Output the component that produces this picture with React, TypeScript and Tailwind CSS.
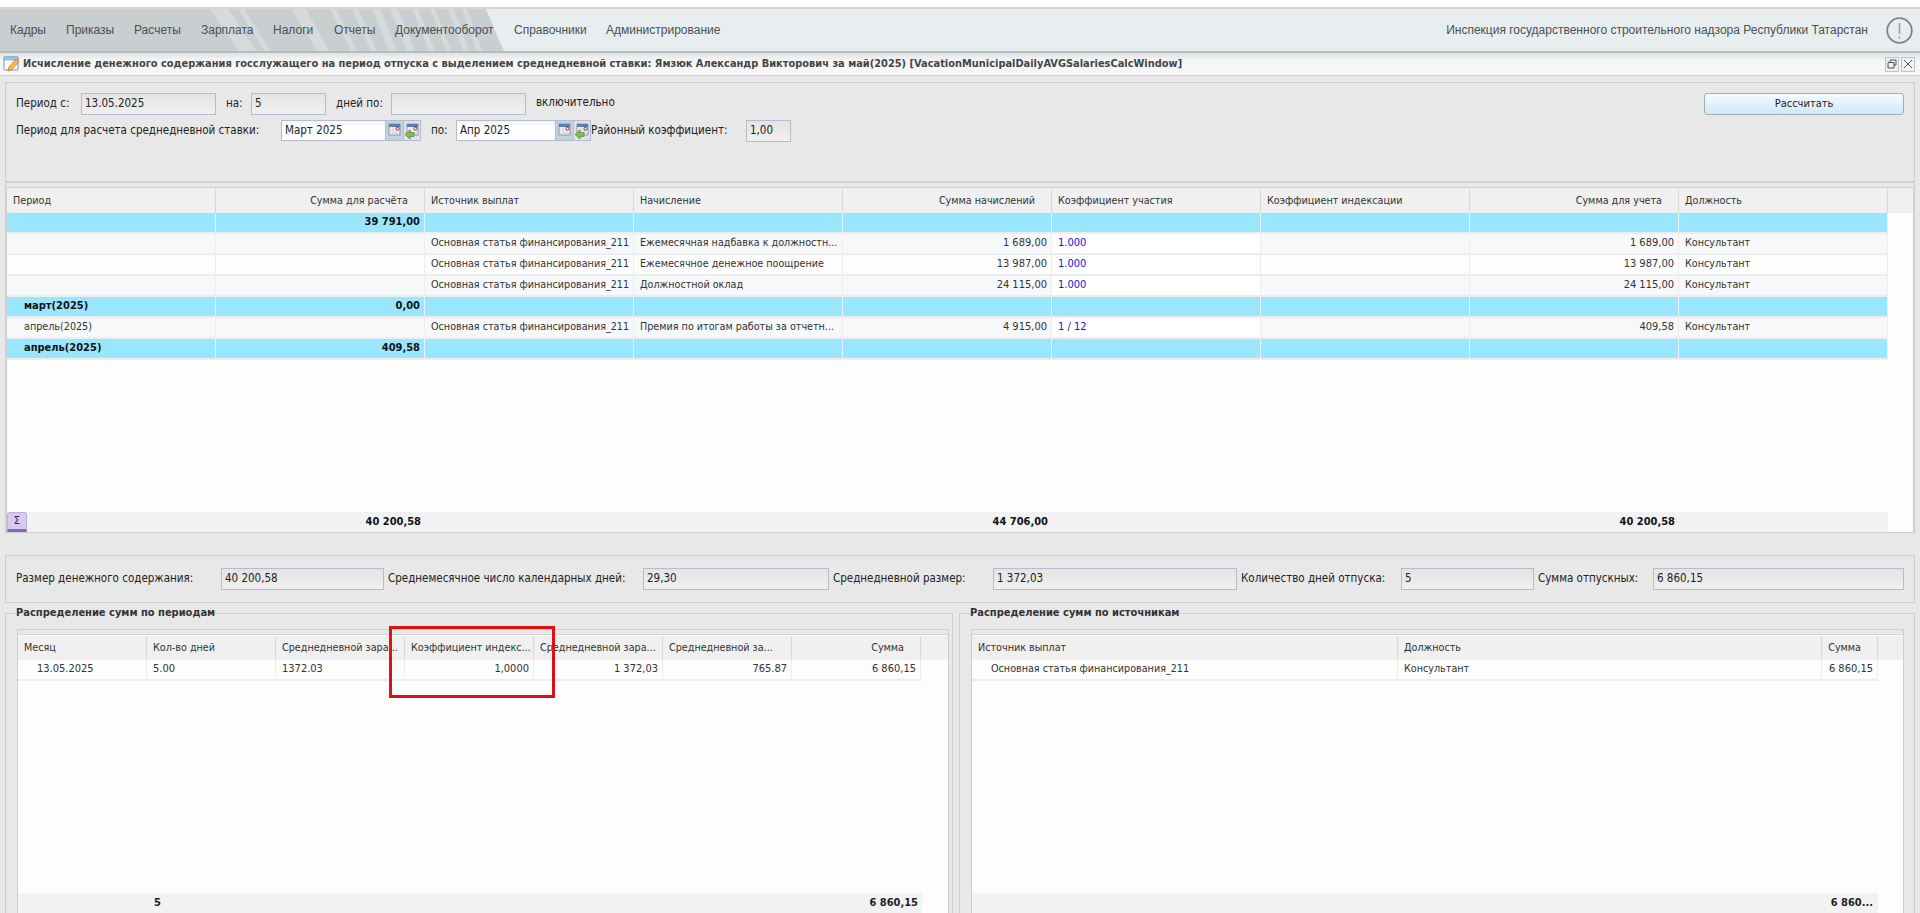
import React from "react";

const F = "font-['DejaVu_Sans_Condensed','DejaVu_Sans',sans-serif]";

const topW = [209, 209, 209, 209, 209, 209, 209, 209, 209];
const topHead: [string, boolean][] = [
  ["Период", false],
  ["Сумма для расчёта", true],
  ["Источник выплат", false],
  ["Начисление", false],
  ["Сумма начислений", true],
  ["Коэффициент участия", false],
  ["Коэффициент индексации", false],
  ["Сумма для учета", true],
  ["Должность", false],
];
const SRC = "Основная статья финансирования_211";
const K = "Консультант";
type R = { t: "b" | "a" | "c"; c: string[] };
const topRows: R[] = [
  { t: "b", c: ["", "39 791,00", "", "", "", "", "", "", ""] },
  { t: "a", c: ["", "", SRC, "Ежемесячная надбавка к должностн...", "1 689,00", "1.000", "", "1 689,00", K] },
  { t: "c", c: ["", "", SRC, "Ежемесячное денежное поощрение", "13 987,00", "1.000", "", "13 987,00", K] },
  { t: "a", c: ["", "", SRC, "Должностной оклад", "24 115,00", "1.000", "", "24 115,00", K] },
  { t: "b", c: ["март(2025)", "0,00", "", "", "", "", "", "", ""] },
  { t: "a", c: ["апрель(2025)", "", SRC, "Премия по итогам работы за отчетн...", "4 915,00", "1 / 12", "", "409,58", K] },
  { t: "b", c: ["апрель(2025)", "409,58", "", "", "", "", "", "", ""] },
];
const rightCol = [false, true, false, false, true, false, true, true, false];

function Field({ w, v, white, h = "h-[22px]" }: { w: string; v: string; white?: boolean; h?: string }) {
  return (
    <div
      className={`${w} ${h} shrink-0 border border-[#b5bccf] pl-[3px] flex items-center text-[11.5px] text-[#222] ${
        white ? "bg-[linear-gradient(#f2f4f6,#ffffff_40%)]" : "bg-[linear-gradient(#e4e4e4,#f0f0f0)]"
      }`}
    >
      {v}
    </div>
  );
}

function Cal({ green }: { green?: boolean }) {
  return (
    <svg width="17" height="19" viewBox="0 0 17 19" className="block">
      <rect x="3" y="3" width="11" height="11" fill="#eef0f4" stroke="#8b98ad" />
      <rect x="3" y="3" width="11" height="3" fill="#5d7fae" />
      <path d="M3.5 9h10M3.5 12h10M7 6v8M10.5 6v8" stroke="#c3cad6" strokeWidth="0.7" />
      <circle cx="11.5" cy="7.5" r="1.5" fill="#fff" stroke="#a01020" />
      {green && <path d="M1 13.5 6 9v2.5h4v4H6V18z" fill="#7cc04a" stroke="#4d8a22" strokeWidth="0.7" />}
    </svg>
  );
}

function DateField({ w, v }: { w: string; v: string }) {
  return (
    <div className="flex h-[21px] shrink-0">
      <Field w={w} v={v} white h="h-[21px]" />
      <div className="w-[17px] h-[21px] border-y border-[#b5bccf] bg-[#c3d0dd]">
        <Cal />
      </div>
      <div className="w-[18px] h-[21px] border border-[#b5bccf] bg-[#e2e2e2]">
        <Cal green />
      </div>
    </div>
  );
}

function HeadCell({ w, t, right, last }: { w: number; t: string; right?: boolean; last?: boolean }) {
  return (
    <div
      style={{ width: w }}
      className={`shrink-0 h-full flex items-center whitespace-nowrap overflow-hidden ${last ? "" : "border-r border-[#d8d8d8]"} ${
        right ? "justify-end pr-[16px]" : "pl-[6px]"
      }`}
    >
      {t}
    </div>
  );
}

function TopGrid() {
  return (
    <div className="mt-[4px] h-[346px] border-t border-x border-b border-[#cfcfcf] bg-[#fdfdfe] flex flex-col">
      <div className="h-[25px] shrink-0 bg-[#f0f0f0] flex text-[10.7px] text-[#333] pt-px">
        {topHead.map(([t, r], i) => (
          <HeadCell key={i} w={topW[i]} t={t} right={r} />
        ))}
      </div>
      <div className="flex-1">
        {topRows.map((row, i) => (
          <div
            key={i}
            className={`flex h-[21px] w-[1881px] border-b-2 ${
              row.t === "b"
                ? "bg-[#9ae6ff] border-[#ecedef] font-bold text-[#111] text-[11px]"
                : row.t === "a"
                  ? "bg-[#f7f8f9] border-[#ecedef] text-[#333] text-[10.7px]"
                  : "bg-[#fdfdfe] border-[#ecedef] text-[#333] text-[10.7px]"
            }`}
          >
            {row.c.map((c, j) => (
              <div
                key={j}
                style={{ width: topW[j] }}
                className={`shrink-0 h-full flex items-center whitespace-nowrap overflow-hidden border-r ${
                  row.t === "b" ? "border-[#e8f6fb]" : "border-[#eeeeee]"
                } ${rightCol[j] ? "justify-end pr-[4px] text-[11px]" : j === 0 ? "pl-[17px]" : "pl-[6px]"} ${
                  j === 5 && row.t !== "b" ? "bg-white text-[#1414e0] text-[11px]" : ""
                }`}
              >
                {c}
              </div>
            ))}
          </div>
        ))}
      </div>
      <div className="h-[20px] shrink-0 flex items-center font-bold text-[11px] text-[#111]">
        <div className="w-[1881px] h-full bg-[#f2f2f3] flex items-center">
          <div className="w-[209px] h-full shrink-0">
            <button className="w-[20px] h-[20px] rounded-t-[3px] border border-[#a9bcd4] border-b-[3px] border-b-[#8a5fc8] bg-[#d9c8f0] flex items-center justify-center text-[11px] font-normal text-[#33235c]">
              Σ
            </button>
          </div>
          <div className="w-[209px] shrink-0 text-right pr-[4px]">40 200,58</div>
          <div className="w-[418px] shrink-0" />
          <div className="w-[209px] shrink-0 text-right pr-[4px]">44 706,00</div>
          <div className="w-[418px] shrink-0" />
          <div className="w-[209px] shrink-0 text-right pr-[4px]">40 200,58</div>
        </div>
      </div>
    </div>
  );
}

function Box({ title, className, children }: { title: string; className: string; children: React.ReactNode }) {
  return (
    <fieldset className={`${className} border border-[#cfcfcf] border-b-0 h-[320px] min-w-0`}>
      <legend className="ml-[10px] px-0 text-[11px] font-bold text-[#333] leading-[14px]">{title}</legend>
      {children}
    </fieldset>
  );
}

function LeftGrid() {
  const w = 129;
  const head: [string, boolean][] = [
    ["Месяц", false],
    ["Кол-во дней", false],
    ["Среднедневной зара...", false],
    ["Коэффициент индекс...", false],
    ["Среднедневной зара...", false],
    ["Среднедневной за...", false],
    ["Сумма", true],
  ];
  const cells: [string, string][] = [
    ["13.05.2025", "pl-[19px]"],
    ["5.00", "pl-[6px]"],
    ["1372.03", "pl-[6px]"],
    ["1,0000", "justify-end pr-[4px]"],
    ["1 372,03", "justify-end pr-[4px]"],
    ["765.87", "justify-end pr-[4px]"],
    ["6 860,15", "justify-end pr-[4px]"],
  ];
  return (
    <div className="mt-[9px] ml-[11px] w-[932px] h-[284px] border-x border-t border-[#cfcfcf] bg-[#fdfdfe] flex flex-col">
      <div className="h-[5px] border-b border-[#d4d4d4] bg-[#e8e8e8] shrink-0" />
      <div className="h-[24px] mt-px shrink-0 bg-[#f0f0f0] flex text-[10.7px] text-[#333]">
        {head.map(([t, r], i) => (
          <HeadCell key={i} w={w} t={t} right={r} />
        ))}
      </div>
      <div className="flex h-[21px] w-[904px] border-b-2 border-[#ecedef] text-[11px] text-[#333] shrink-0">
        {cells.map(([t, c], i) => (
          <div key={i} style={{ width: w }} className={`shrink-0 flex items-center border-r border-[#eeeeee] ${c}`}>
            {t}
          </div>
        ))}
      </div>
      <div className="flex-1" />
      <div className="h-[20px] w-[904px] shrink-0 bg-[#f2f2f3] flex items-center text-[11px] font-bold text-[#222]">
        <div className="w-[129px] shrink-0" />
        <div className="w-[129px] pl-[7px] shrink-0">5</div>
        <div className="flex-1 text-right pr-[4px]">6 860,15</div>
      </div>
    </div>
  );
}

function RightGrid() {
  return (
    <div className="mt-[9px] ml-[11px] w-[933px] h-[284px] border-x border-t border-[#cfcfcf] bg-[#fdfdfe] flex flex-col">
      <div className="h-[5px] border-b border-[#d4d4d4] bg-[#e8e8e8] shrink-0" />
      <div className="h-[24px] mt-px shrink-0 bg-[#f0f0f0] flex text-[10.7px] text-[#333]">
        <HeadCell w={426} t="Источник выплат" />
        <HeadCell w={424} t="Должность" />
        <HeadCell w={56} t="Сумма" right />
      </div>
      <div className="flex h-[21px] w-[906px] border-b-2 border-[#ecedef] text-[10.7px] text-[#333] shrink-0">
        <div className="w-[426px] shrink-0 flex items-center pl-[19px] border-r border-[#eeeeee]">{SRC}</div>
        <div className="w-[424px] shrink-0 flex items-center pl-[6px] border-r border-[#eeeeee]">{K}</div>
        <div className="w-[56px] shrink-0 flex items-center justify-end pr-[4px] border-r border-[#eeeeee] whitespace-nowrap text-[11px]">
          6 860,15
        </div>
      </div>
      <div className="flex-1" />
      <div className="h-[20px] w-[906px] shrink-0 bg-[#f2f2f3] flex items-center justify-end pr-[5px] text-[11px] font-bold text-[#222]">
        6 860...
      </div>
    </div>
  );
}

const menu = [
  ["Кадры", "w-[56px]"],
  ["Приказы", "w-[68px]"],
  ["Расчеты", "w-[67px]"],
  ["Зарплата", "w-[72px]"],
  ["Налоги", "w-[61px]"],
  ["Отчеты", "w-[61px]"],
  ["Документооборот", "w-[119px]"],
  ["Справочники", "w-[92px]"],
  ["Администрирование", "w-[120px]"],
];

export default function App() {
  return (
    <div className={`relative w-[1920px] h-[913px] overflow-hidden bg-white flex flex-col ${F} text-[11px] text-[#333]`}>
      <div className="h-[7px] shrink-0 bg-white border-b border-transparent" />
      {/* menu */}
      <div className="relative h-[46px] shrink-0 border-t-2 border-t-[#d4d6d6] border-b-2 border-b-[#b4bdc4] bg-[#e8eef0] flex items-center overflow-hidden font-['Liberation_Sans',sans-serif] text-[12px] text-[#4b4f52]">
        <svg className="absolute left-0 top-0" width="520" height="44" viewBox="0 0 520 44">
          <path d="M0 0H486C492 14 498 30 505 44H0Z" fill="#c9ced0" />
          <path d="M210 0h18l30 44h-18zM238 0h6l28 44h-6zM292 0h14l24 44h-12zM330 0h6l22 44h-6zM352 0h6l20 44h-6zM372 0h8l18 44h-8zM390 0h8l18 44h-8zM412 0h6l18 44h-6zM430 0h5l17 44h-5zM448 0h6l16 44h-6zM462 0h5l16 44h-6z" fill="#dfe5e6" opacity="0.55" />
        </svg>
        <div className="relative flex pl-[10px]">
          {menu.map(([t, w]) => (
            <span key={t} className={`${w} shrink-0 whitespace-nowrap`}>
              {t}
            </span>
          ))}
        </div>
        <div className="relative ml-auto flex items-center pr-[7px]">
          <span className="mr-[18px] whitespace-nowrap">Инспекция государственного строительного надзора Республики Татарстан</span>
          <svg width="27" height="27" viewBox="0 0 27 27">
            <circle cx="13.5" cy="13.5" r="12.3" fill="none" stroke="#7e8384" strokeWidth="1.8" />
            <path d="M13.5 6v11" stroke="#9a9fa0" strokeWidth="1.6" />
            <circle cx="13.5" cy="20.5" r="1" fill="#9a9fa0" />
          </svg>
        </div>
      </div>
      {/* title */}
      <div className="h-[23px] shrink-0 bg-[linear-gradient(#e2e2e2,#f6f6f6_35%,#f6f6f6)] border-b border-[#d2d2d2] flex items-center pl-[3px] pr-[5px]">
        <svg width="18" height="18" viewBox="0 0 18 18" className="shrink-0">
          <rect x="1" y="2" width="14" height="13" rx="1" fill="#fdfdff" stroke="#6c94c8" />
          <rect x="1" y="2" width="14" height="3" fill="#a9c6e8" stroke="#6c94c8" strokeWidth="0.6" />
          <path d="M5 16l1-4 7-8 3 2.5-7 8z" fill="#f2b93c" stroke="#b77a17" strokeWidth="0.7" />
        </svg>
        <span className="ml-[2px] font-bold text-[10.95px] text-[#444] whitespace-nowrap">
          Исчисление денежного содержания госслужащего на период отпуска с выделением среднедневной ставки: Ямзюк Александр Викторович за май(2025) [VacationMunicipalDailyAVGSalariesCalcWindow]
        </span>
        <div className="ml-auto flex gap-[2px]">
          <div className="w-[14px] h-[15px] border border-[#bcc4cf] bg-[#eef1f4] flex items-center justify-center">
            <svg width="10" height="10" viewBox="0 0 10 10">
              <path d="M3 3V1h6v5H7M1 3.5h6V9H1z" fill="none" stroke="#555" strokeWidth="1" />
            </svg>
          </div>
          <div className="w-[14px] h-[15px] border border-[#bcc4cf] bg-[#eef1f4] flex items-center justify-center">
            <svg width="10" height="10" viewBox="0 0 10 10">
              <path d="M1 1l8 8M9 1l-8 8" stroke="#555" strokeWidth="1" />
            </svg>
          </div>
        </div>
      </div>
      {/* body */}
      <div className="flex-1 min-h-0 bg-[#e8e8e8] px-[5px] pt-[6px] text-[11.5px] text-[#222]">
        <div className="border-x border-t border-[#cfcfcf]">
          <div className="h-[98px] px-[10px] pt-[10px]">
            <div className="flex items-center h-[22px]">
              <span className="w-[65px] shrink-0">Период с:</span>
              <Field w="w-[135px]" v="13.05.2025" />
              <span className="ml-[10px] w-[25px] shrink-0">на:</span>
              <Field w="w-[75px]" v="5" />
              <span className="ml-[10px] w-[55px] shrink-0">дней по:</span>
              <Field w="w-[135px]" v="" />
              <span className="ml-[10px] -translate-y-px">включительно</span>
              <button className="ml-auto w-[200px] h-[22px] rounded-[3px] border border-[#9fb0bd] bg-[linear-gradient(#f4fbff,#cfe9f6)] text-[11px] text-[#222]">
                Рассчитать
              </button>
            </div>
            <div className="flex items-center h-[21px] mt-[5px]">
              <span className="w-[265px] shrink-0">Период для расчета среднедневной ставки:</span>
              <DateField w="w-[105px]" v="Март 2025" />
              <span className="ml-[10px] w-[25px] shrink-0">по:</span>
              <DateField w="w-[100px]" v="Апр 2025" />
              <span className="w-[155px] shrink-0">Районный коэффициент:</span>
              <Field w="w-[45px]" v="1,00" />
            </div>
          </div>
          <div className="h-[2px] bg-[#d2d2d2]" />
          <div>
            <TopGrid />
          </div>
        </div>

        <div className="mt-[22px] h-[48px] border border-[#cfcfcf] flex items-center pl-[10px]">
          <span className="w-[205px] shrink-0">Размер денежного содержания:</span>
          <Field w="w-[163px]" v="40 200,58" />
          <span className="ml-[4px] w-[255px] shrink-0">Среднемесячное число календарных дней:</span>
          <Field w="w-[186px]" v="29,30" />
          <span className="ml-[4px] w-[160px] shrink-0">Среднедневной размер:</span>
          <Field w="w-[244px]" v="1 372,03" />
          <span className="ml-[4px] w-[160px] shrink-0">Количество дней отпуска:</span>
          <Field w="w-[133px]" v="5" />
          <span className="ml-[4px] w-[115px] shrink-0">Сумма отпускных:</span>
          <Field w="w-[251px]" v="6 860,15" />
        </div>

        <div className="mt-[3px] flex gap-[6px]">
          <Box title="Распределение сумм по периодам" className="w-[948px] shrink-0">
            <LeftGrid />
          </Box>
          <Box title="Распределение сумм по источникам" className="w-[956px] shrink-0">
            <RightGrid />
          </Box>
        </div>
      </div>
      {/* highlight annotation */}
      <div className="absolute left-[389px] top-[626px] w-[166px] h-[72px] border-[3px] border-[#dd1016]" />
    </div>
  );
}
